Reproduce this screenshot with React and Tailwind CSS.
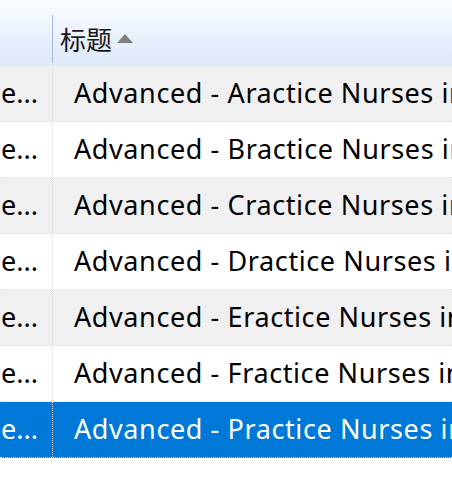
const rows = ['A', 'B', 'C', 'D', 'E', 'F', 'P'];

export default function App() {
  return (
    <div className="w-[452px] h-[492px] overflow-hidden bg-white font-['Noto_Sans','Noto_Sans_CJK_SC',sans-serif]">
      {/* column header */}
      <div className="flex h-[66px] bg-gradient-to-b from-[#fafcff] to-[#dce8f8]">
        <div className="w-[52px] shrink-0" />
        <div className="flex items-center pt-[14px] pb-[3px]">
          <div className="h-[48px] w-px bg-[#a4bcd8]" />
        </div>
        <div className="flex items-center pl-[7px] pt-[14px] gap-[5px]">
          <span className="text-[26px] leading-none text-[#1a1a1a]">标题</span>
          <span className="mt-[-4px] h-0 w-0 border-x-[8px] border-b-[9px] border-x-transparent border-b-[#7f7f7f]" />
        </div>
      </div>

      {rows.map((l, i) => {
        const selected = l === 'P';
        const bg = selected ? 'bg-[#0078d7] text-white' : i % 2 === 0 ? 'bg-[#f0f0f0] text-black' : 'bg-white text-black';
        return (
          <div key={l} className={`flex h-[56px] border-b border-dotted border-[#dcdcdc] ${bg}`}>
            <div className="w-[53px] shrink-0 overflow-hidden whitespace-nowrap border-r border-dotted border-[#d8d8d8] flex items-center justify-end pr-[14px] text-[27px]">
              e...
            </div>
            <div className="flex items-center pl-[21px] whitespace-nowrap text-[27px] tracking-[0.6px]">
              Advanced - {l}ractice Nurses in
            </div>
          </div>
        );
      })}
    </div>
  );
}
